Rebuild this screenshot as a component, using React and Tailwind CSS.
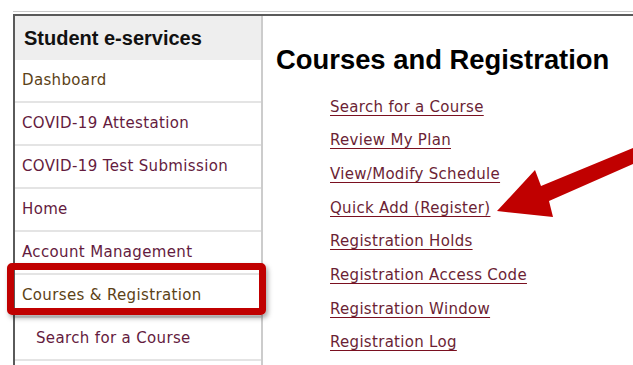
export default function App() {
  const side = [
    { t: "Dashboard", c: "text-[#5c4216]" },
    { t: "COVID-19 Attestation", c: "text-[#641b3e]" },
    { t: "COVID-19 Test Submission", c: "text-[#641b3e]" },
    { t: "Home", c: "text-[#641b3e]" },
    { t: "Account Management", c: "text-[#641b3e]" },
    { t: "Courses & Registration", c: "text-[#5c4216]" },
    { t: "Search for a Course", c: "text-[#641b3e]", indent: true },
    { t: "", c: "" },
  ];
  const links = [
    "Search for a Course",
    "Review My Plan",
    "View/Modify Schedule",
    "Quick Add (Register)",
    "Registration Holds",
    "Registration Access Code",
    "Registration Window",
    "Registration Log",
  ];
  return (
    <div className="relative w-[633px] h-[365px] overflow-hidden bg-white">
      <div className="pt-[11px] pl-[13px]">
        <div className="border-t border-[#c8c8c8]" />
        <div className="mt-[2px] flex border-t-2 border-l-2 border-[#5a5a5a] h-[400px]">
          <div className="w-[248px] shrink-0 border-r-2 border-[#cccccc]">
            <div className="h-[44px] bg-[#eeeeee] flex items-center pl-[9px] font-['Liberation_Sans',Arial,sans-serif] font-bold text-[20px] text-[#111]">
              Student e-services
            </div>
            {side.map((s, i) => (
              <div
                key={i}
                className={`h-[43px] border-b-2 border-[#e4e4e4] flex items-center ${s.indent ? "pl-[21px]" : "pl-[7px]"} font-['DejaVu_Sans',Verdana,sans-serif] text-[15px] tracking-[0.35px] ${s.c}`}
              >
                {s.t}
              </div>
            ))}
          </div>
          <div className="flex-1 pl-[13px] pt-[29px]">
            <h1 className="font-['Liberation_Sans',Arial,sans-serif] font-bold text-[27.4px] leading-[30px] text-black">
              Courses and Registration
            </h1>
            <div className="mt-[15px] ml-[54px] flex flex-col">
              {links.map((l) => (
                <div key={l} className="h-[33.7px] flex items-center">
                  <span className="font-['DejaVu_Sans',Verdana,sans-serif] text-[15px] tracking-[0.3px] text-[#6b1f35] underline decoration-[#7a1020] underline-offset-[3px]">
                    {l}
                  </span>
                </div>
              ))}
            </div>
          </div>
        </div>
      </div>

      <div className="absolute left-[7px] top-[263px] w-[259px] h-[52px] border-[7px] border-[#c00000] rounded-[5px] shadow-[2px_3px_5px_rgba(0,0,0,0.35)]" />

      <svg className="absolute left-0 top-0" width="633" height="365" viewBox="0 0 633 365">
        <polygon
          points="497,211 535,170 541,186 633,148 633,164 549,201 553,217"
          fill="#c00000"
        />
      </svg>
    </div>
  );
}
